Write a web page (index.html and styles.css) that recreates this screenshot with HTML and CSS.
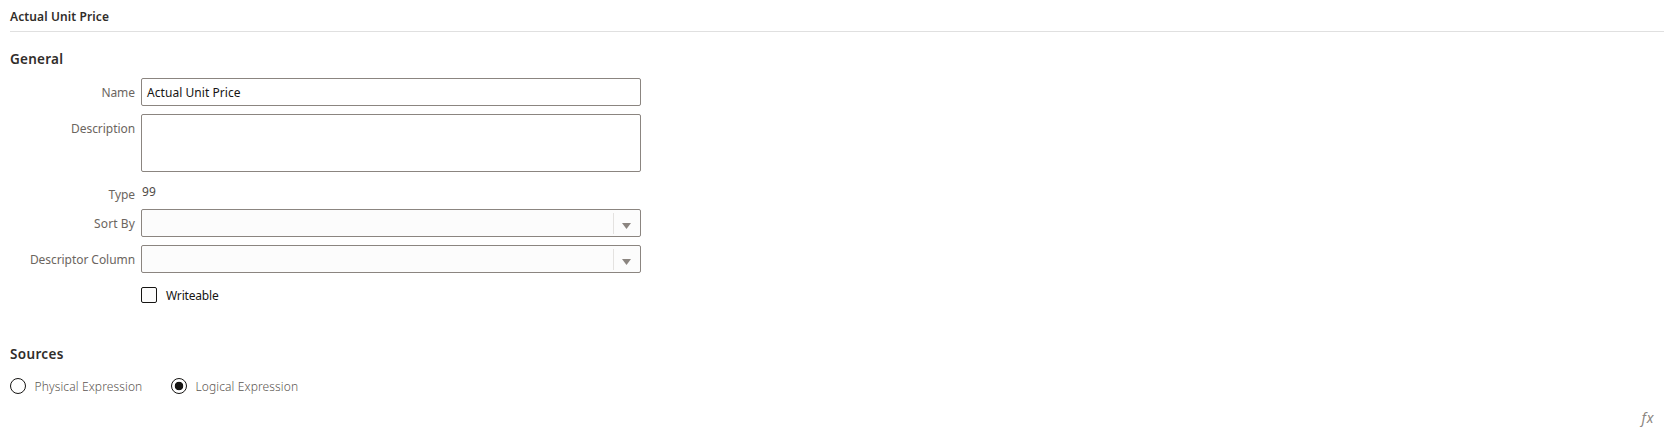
FILE: index.html
```html
<!DOCTYPE html>
<html lang="en">
<head>
<meta charset="utf-8">
<title>Actual Unit Price</title>
<link rel="stylesheet" href="styles.css">
</head>
<body>
<main class="page">
  <h1 class="title">Actual Unit Price</h1>
  <section>
    <h2 class="heading">General</h2>
    <div class="form">
      <label class="label">Name</label>
      <div class="field">Actual Unit Price</div>
      <label class="label">Description</label>
      <div class="field area"></div>
      <span class="label label-type">Type</span>
      <span class="value">99</span>
      <label class="label label-sort">Sort By</label>
      <div class="field select"><span class="arrow"><svg width="9" height="6" viewBox="0 0 9 6"><path d="M0 0h9L4.5 6z" fill="#8b8580"/></svg></span></div>
      <label class="label">Descriptor Column</label>
      <div class="field select"><span class="arrow"><svg width="9" height="6" viewBox="0 0 9 6"><path d="M0 0h9L4.5 6z" fill="#8b8580"/></svg></span></div>
      <div class="check"><span class="box"></span><span class="check-text">Writeable</span></div>
    </div>
  </section>
  <section class="sources">
    <h2 class="heading heading-sources">Sources</h2>
    <div class="radios">
      <div class="radio radio-physical"><span class="circle"></span><span>Physical Expression</span></div>
      <div class="radio"><span class="circle selected"></span><span>Logical Expression</span></div>
    </div>
    <div class="tools"><span class="fx">fx</span></div>
  </section>
</main>
</body>
</html>
```
FILE: styles.css
```css
* { box-sizing: border-box; }
body {
  margin: 0;
  background: #fff;
  color: #161513;
  font: 12px/18px "Noto Sans", "Open Sans", sans-serif;
}
.page { padding: 0 4px 0 10px; }
.title {
  margin: 0;
  height: 32px;
  padding-top: 8px;
  border-bottom: 1px solid #e0e0e0;
  color: #312d2a;
  font-size: 12px;
  font-weight: 600;
  line-height: 18px;
  letter-spacing: .11px;
}
.heading {
  margin: 0;
  padding-top: 17px;
  height: 46px;
  color: #312d2a;
  font-size: 13.5px;
  font-weight: 600;
  line-height: 20px;
  letter-spacing: .25px;
}
.form {
  display: grid;
  grid-template-columns: 125px 500px;
  column-gap: 6px;
  grid-template-rows: 36px 58px 37px 36px 42px 16px;
  align-items: start;
}
.label {
  padding-top: 6px;
  text-align: right;
  color: #6b6560;
  letter-spacing: -.06px;
}
.label-type { padding-top: 14px; }
.label-sort { letter-spacing: .1px; }
.field {
  height: 28px;
  padding: 5px;
  border: 1px solid #8b8580;
  border-radius: 2px;
  letter-spacing: .05px;
}
.area { height: 58px; }
.value { padding: 11px 0 0 1px; color: #4f4a46; letter-spacing: .2px; }
.select {
  display: flex;
  justify-content: flex-end;
  padding: 3px 0 2px;
  background: #fcfcfc;
}
.arrow {
  display: flex;
  width: 27px;
  padding: 10px 0 0 8px;
  border-left: 1px solid #e4e2e0;
}
.check {
  grid-column: 2;
  display: flex;
  gap: 9px;
}
.box {
  width: 16px;
  height: 16px;
  border: 1px solid #161513;
  border-radius: 2px;
  background: #fcfcfc;
}
.check-text { line-height: 18px; letter-spacing: -.18px; }
.sources { padding-top: 24px; }
.heading-sources { height: 51px; letter-spacing: .35px; }
.radios { display: flex; height: 28px; }
.radio { display: flex; gap: 8.5px; color: #5c5651; font-weight: 300; letter-spacing: .12px; }
.radio-physical { width: 161px; }
.circle {
  flex: none;
  width: 16px;
  height: 16px;
  border: 1px solid #161513;
  border-radius: 50%;
}
.selected { background: radial-gradient(circle, #161513 4px, transparent 4.6px); }
.tools {
  display: flex;
  justify-content: flex-end;
  padding: 3px 10px 0 0;
}
.fx { color: #8b8580; font-size: 14px; font-style: italic; letter-spacing: .6px; }
```
